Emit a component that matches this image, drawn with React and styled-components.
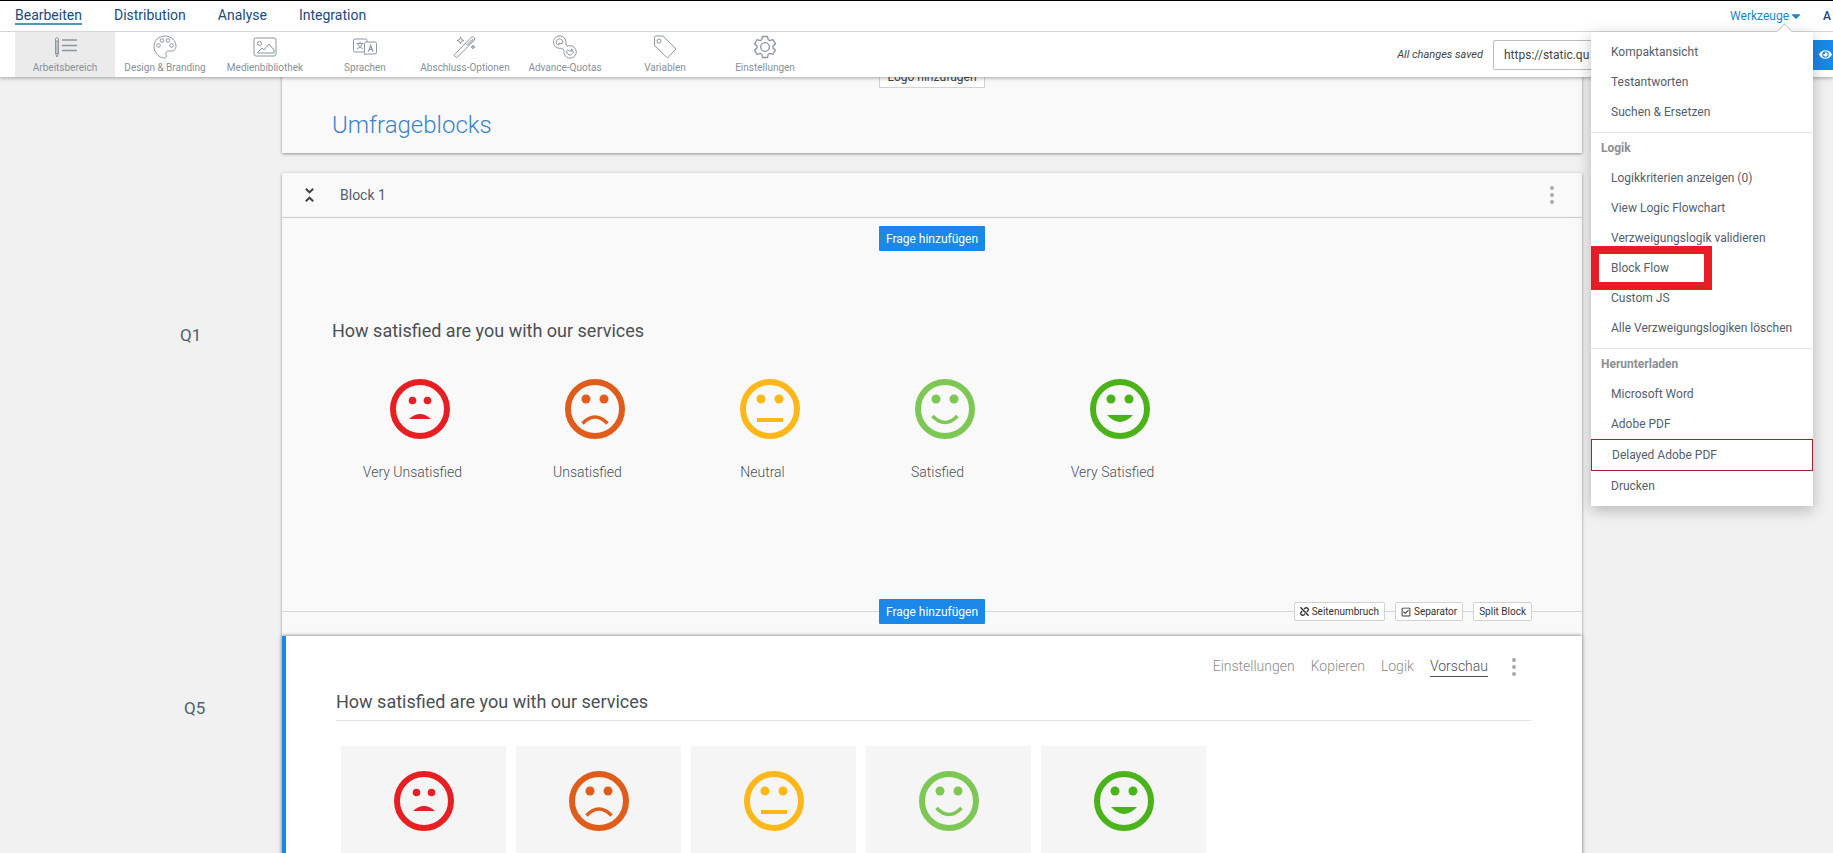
import styled, { createGlobalStyle } from 'styled-components';
import { FaCaretDown, FaEye, FaRegCheckSquare, FaUnlink } from 'react-icons/fa';

const GlobalStyle = createGlobalStyle`
  * {
    box-sizing: border-box;
  }

  body {
    margin: 0;
    background: #f1f1f1;
    color: #545e6b;
    font-family: Roboto, 'Open Sans', sans-serif;
    font-size: 12px;
  }

  button,
  input {
    font-family: inherit;
  }

  a {
    color: inherit;
    text-decoration: none;
  }
`;

const Page = styled.div`
  height: 100vh;
  overflow: hidden;
`;

const Header = styled.header`
  position: relative;
  z-index: 5;
  background: #fff;
  border-top: 1px solid #000;
  box-shadow: 0 1px 4px rgba(0, 0, 0, 0.35);
`;

const TopBar = styled.div`
  display: flex;
  justify-content: space-between;
  height: 31px;
  padding-left: 15px;
  border-bottom: 1px solid #d4d6d8;
`;

const MainNav = styled.nav`
  display: flex;
  align-items: center;
  gap: 32px;
`;

const NavLink = styled.a`
  color: #1b4a7e;
  font-size: 14px;
  line-height: 16px;
  border-bottom: 2px solid ${({ $active }) => ($active ? '#4a9ab5' : 'transparent')};
`;

const SideNav = styled.div`
  display: flex;
  align-items: center;
  gap: 20px;
`;

const ToolsWrapper = styled.div`
  position: relative;
`;

const ToolsButton = styled.button`
  display: flex;
  align-items: center;
  height: 30px;
  padding: 0;
  border: 0;
  background: none;
  color: #1b87c0;
  font-size: 12px;
`;

const AccountLink = styled.a`
  width: 10px;
  color: #1b4a7e;
  font-size: 12px;
  font-weight: 500;
`;

const ToolBar = styled.div`
  display: flex;
  justify-content: space-between;
  height: 45px;
  padding-left: 15px;
`;

const ToolList = styled.div`
  display: flex;
`;

const Tool = styled.button`
  display: flex;
  flex-direction: column;
  align-items: center;
  gap: 3px;
  width: 100px;
  padding: 3px 0 0;
  border: 0;
  background: ${({ $active }) => ($active ? '#ebebeb' : 'none')};
  color: #87919a;
  font-size: 10px;
  line-height: 12px;
  white-space: nowrap;
`;

const ToolIcon = styled.svg`
  width: 24px;
  height: 24px;
  fill: none;
  stroke: #8d969f;
  stroke-width: 1;
`;

const Share = styled.div`
  display: flex;
  align-items: center;
`;

const Saved = styled.span`
  margin-right: 10px;
  color: #444;
  font-size: 11px;
  font-style: italic;
`;

const UrlInput = styled.input`
  width: 320px;
  height: 30px;
  padding: 0 10px;
  border: 1px solid #b9bbbd;
  border-radius: 2px;
  color: #444;
  font-size: 12px;
`;

const PreviewButton = styled.button`
  display: flex;
  align-items: center;
  width: 20px;
  height: 30px;
  padding: 0 0 0 6px;
  border: 0;
  background: #1b87e6;
  color: #fff;
`;

const Menu = styled.div`
  position: absolute;
  top: 31px;
  right: -10px;
  width: 222px;
  background: #fff;
  box-shadow: 0 4px 14px rgba(0, 0, 0, 0.25);

  &::before {
    content: '';
    position: absolute;
    top: -6px;
    right: 22px;
    width: 12px;
    height: 12px;
    background: #fff;
    border: solid #c6cacd;
    border-width: 1px 0 0 1px;
    transform: rotate(45deg);
  }
`;

const MenuGroup = styled.div`
  position: relative;
  padding: 0 0 5px;
  background: #fff;

  & + & {
    border-top: 1px solid #e4e6e8;
  }

  &:first-child {
    padding-top: 5px;
  }
`;

const MenuHeading = styled.h4`
  margin: 0;
  padding-left: 10px;
  color: #8b8f93;
  font-size: 12px;
  font-weight: 700;
  line-height: 30px;
`;

const MenuItem = styled.a`
  position: relative;
  display: block;
  padding-left: 20px;
  border: ${({ $outlined }) => ($outlined ? '1px solid #a8232b' : '0')};
  font-size: 12px;
  line-height: 30px;
  white-space: nowrap;
`;

const Highlight = styled.span`
  position: absolute;
  z-index: 1;
  top: -7px;
  left: 0;
  width: 121px;
  height: 44px;
  border: 8px solid #e81c24;
`;

const Main = styled.main`
  margin-top: -15px;
`;

const Row = styled.div`
  display: grid;
  grid-template-columns: 282px 1fr 251px;
`;

const QuestionNumber = styled.div`
  grid-column: 1;
  padding: ${({ $top }) => $top}px 0 0 ${({ $left }) => $left}px;
  color: #545e6b;
  font-size: 17px;
  line-height: 24px;
`;

const Panel = styled.section`
  grid-column: 2;
  background: #f9f9f9;
  box-shadow: 0 1px 3px rgba(0, 0, 0, 0.4);
`;

const TitlePanel = styled(Panel)`
  display: flex;
  flex-direction: column;
  align-items: center;
  height: 91px;
  margin-bottom: 20px;
`;

const SurveyTitle = styled.h1`
  align-self: flex-start;
  margin: 21px 0 0 50px;
  color: #3b84c4;
  font-size: 24px;
  font-weight: 300;
  line-height: 32px;
`;

const LogoButton = styled.button`
  height: 26px;
  padding: 4px 7px 0;
  border: 1px solid #d0d2d4;
  background: #fff;
  color: #444;
  font-size: 12px;
`;

const BlockHeader = styled(Panel)`
  display: flex;
  align-items: center;
  height: 45px;
  padding: 0 25px 0 23px;
  border-bottom: 1px solid #d9dbdc;
`;

const BlockName = styled.h2`
  flex: 1;
  margin: 0 0 0 26px;
  font-size: 14px;
  font-weight: 400;
`;

const IconButton = styled.button`
  display: flex;
  padding: 0;
  border: 0;
  background: none;
`;

const QuestionPanel = styled(Panel)`
  display: flex;
  flex-direction: column;
  height: 418px;
  padding-top: 8px;
`;

const ActivePanel = styled(Panel)`
  position: relative;
  height: 340px;
  padding: 21px 50px 0;
  border-left: 4px solid #1b87e6;
  background: #fff;
  box-shadow: 0 0 4px rgba(0, 0, 0, 0.55);
`;

const AddButton = styled.button`
  align-self: center;
  height: 25px;
  padding: 0 7px;
  border: 0;
  border-radius: 1px;
  background: #1b87e6;
  color: #fff;
  font-size: 12px;
`;

const QuestionTitle = styled.h3`
  margin: ${({ $underlined }) => ($underlined ? '12px 0 25px' : '67px 50px 35px')};
  padding-bottom: ${({ $underlined }) => ($underlined ? 5 : 0)}px;
  border-bottom: ${({ $underlined }) => ($underlined ? '1px solid #e4e6e8' : '0')};
  color: #4c4f54;
  font-size: 18px;
  font-weight: 400;
  line-height: 26px;
`;

const Faces = styled.div`
  display: flex;
  gap: 10px;
  padding-left: ${({ $indent }) => $indent}px;
`;

const FaceTile = styled.div`
  display: flex;
  flex-direction: column;
  align-items: center;
  gap: 22px;
  width: 165px;
  padding: ${({ $filled }) => ($filled ? '25px 0 70px' : '0')};
  background: ${({ $filled }) => ($filled ? '#f5f5f5' : 'none')};
`;

const FaceLabel = styled.span`
  padding-right: 14px;
  color: #4c5056;
  font-size: 14px;
  font-weight: 300;
  line-height: 22px;
`;

const InsertBar = styled.div`
  display: grid;
  grid-template-columns: 1fr auto 1fr;
  align-items: center;
  margin-top: auto;
  margin-bottom: 12px;
  background: linear-gradient(#d4d6d8, #d4d6d8) center / 100% 1px no-repeat;

  ${AddButton} {
    grid-column: 2;
  }
`;

const InsertActions = styled.div`
  display: flex;
  justify-content: flex-end;
  gap: 10px;
  padding-right: 50px;
`;

const SmallButton = styled.button`
  display: flex;
  align-items: center;
  gap: 3px;
  height: 19px;
  padding: 0 5px;
  border: 1px solid #d0d2d4;
  border-radius: 2px;
  background: #fff;
  color: #333;
  font-size: 10px;
`;

const QuestionActions = styled.div`
  display: flex;
  align-items: center;
  justify-content: flex-end;
  gap: 16px;
  padding-right: 13px;
`;

const QuestionAction = styled.a`
  color: ${({ $active }) => ($active ? '#4c4f54' : '#8c8c8c')};
  border-bottom: 1px solid ${({ $active }) => ($active ? '#4c4f54' : 'transparent')};
  font-size: 14px;
  font-weight: 300;
  line-height: 19px;

  &:last-of-type {
    margin-right: 5px;
  }
`;

const TOOLS = [
  {
    label: 'Arbeitsbereich',
    icon: (
      <>
        <path d="M2.500 3.500q1.500-2 3 0v15L4 22l-1.500-3.500zM2.500 6h3M2.500 18.500h3M4 6v12" />
        <path d="M9 5h15M9 10.500h15M9 15.500h15" strokeWidth="1.500" />
      </>
    ),
  },
  {
    label: 'Design & Branding',
    icon: (
      <>
        <path d="M12 1C5.500 1 1 5.500 1 11.500S6 23 11.500 23c2 0 2.500-1.200 1.800-2.600-.8-1.800-.8-4.400 2.200-4.400h3c2.600 0 4.500-1.600 4.500-4.500C23 5.500 18 1 12 1z" />
        <circle cx="5.500" cy="10.500" r="1.800" />
        <circle cx="9" cy="5.500" r="1.800" />
        <circle cx="15" cy="5.500" r="1.800" />
        <circle cx="18.500" cy="10.500" r="1.800" />
      </>
    ),
  },
  {
    label: 'Medienbibliothek',
    icon: (
      <>
        <rect x="1" y="3" width="22" height="18" rx="2" />
        <circle cx="6.500" cy="8.500" r="2" />
        <path d="M4 18l5-5 2 2 5-6 5 6v3z" />
      </>
    ),
  },
  {
    label: 'Sprachen',
    icon: (
      <>
        <path d="M11 17H2q-1.500 0-1.500-1.500v-10Q.5 4 2 4h10.500Q14 4 14 5.500V7" />
        <path d="M13.500 7H22q1.500 0 1.500 1.500v9Q23.500 19 22 19h-8.500q-1.500 0-1.500 1-.5-1-.5-2.500v-9Q11.500 7 13.500 7z" />
        <path d="M3.500 8.500h7M7 7v1.500M9.500 8.500Q8.500 12 4 14M4.500 8.500Q6 12 10 14" />
        <path d="M15.500 16.500l2.200-6 2.300 6M16.300 14.500h3" strokeWidth="1.200" />
      </>
    ),
  },
  {
    label: 'Abschluss-Optionen',
    icon: (
      <>
        <path d="M1.500 19.500L18 2.500q1.500-1.500 3 0t0 3L4.500 22q-1 1-2 0l-1-1q-.7-.7 0-1.500zM14 9.500l4.500-4.500q1-1 1.500-.5t-.5 1.500L15 10.500z" />
        <path d="M7.500 2l.9 2.600L11 5.500l-2.600.9L7.500 9l-.9-2.600L4 5.500l2.600-.9zM20 10l.5 1.500 1.500.5-1.500.5L20 14l-.5-1.500L18 12l1.500-.5z" />
      </>
    ),
  },
  {
    label: 'Advance-Quotas',
    icon: (
      <>
        <path d="M9.500 13.500L7.300 13.300A6.200 6.200 0 1 1 12.800 6q.4 1.500-.1 3l1.300 2 3.200-.3A6.200 6.200 0 1 1 11 18q-.3-1.300 0-2.500z" />
        <path d="M9.500 8.500A3.200 3.200 0 1 0 6 10.300l-.3-2 2 .2zM14.800 14.500A3.200 3.200 0 1 0 18.500 14l.2 2.200-2.500-.2z" />
      </>
    ),
  },
  {
    label: 'Variablen',
    icon: (
      <>
        <path d="M1.500 2.500q0-1.500 1.500-1.500h7L23 13.800 14.500 23 1.500 10.500z" />
        <circle cx="6" cy="6" r="2" />
      </>
    ),
  },
  {
    label: 'Einstellungen',
    icon: (
      <>
        <path
          d="M9.500 1.500h5l.7 3.200 1.600.9 3.100-1 2.500 4.300-2.400 2.200v1.800l2.400 2.200-2.500 4.300-3.100-1-1.600.9-.7 3.200h-5l-.7-3.200-1.600-.9-3.100 1-2.500-4.300L4 12.900v-1.800L1.600 8.900l2.500-4.300 3.100 1 1.600-.9z"
          strokeLinejoin="round"
          strokeWidth="1.300"
        />
        <circle cx="12" cy="12" r="4.300" strokeWidth="1.300" />
      </>
    ),
  },
];

const MENU = [
  { items: ['Kompaktansicht', 'Testantworten', 'Suchen & Ersetzen'] },
  {
    heading: 'Logik',
    items: [
      'Logikkriterien anzeigen (0)',
      'View Logic Flowchart',
      'Verzweigungslogik validieren',
      'Block Flow',
      'Custom JS',
      'Alle Verzweigungslogiken löschen',
    ],
  },
  {
    heading: 'Herunterladen',
    items: ['Microsoft Word', 'Adobe PDF', 'Delayed Adobe PDF', 'Drucken'],
  },
];

const FACES = [
  {
    label: 'Very Unsatisfied',
    color: '#e62022',
    eyes: { x: 7.5, y: 21.5, r: 3.8 },
    mouth: <path d="M19 40q11-10 22 0z" fill="#e62022" />,
  },
  {
    label: 'Unsatisfied',
    color: '#e05c1a',
    eyes: { x: 9, y: 20, r: 4.5 },
    mouth: (
      <path d="M17.500 44.500q12.500-13 25 0" fill="none" stroke="#e05c1a" strokeWidth="3.500" />
    ),
  },
  {
    label: 'Neutral',
    color: '#fcb81a',
    eyes: { x: 9, y: 20, r: 4.5 },
    mouth: <path d="M17 39h26v4H17z" fill="#fcb81a" />,
  },
  {
    label: 'Satisfied',
    color: '#7dc855',
    eyes: { x: 9, y: 20, r: 4.5 },
    mouth: (
      <path d="M17.500 37q12.500 13 25 0" fill="none" stroke="#7dc855" strokeWidth="3.500" />
    ),
  },
  {
    label: 'Very Satisfied',
    color: '#4bb31a',
    eyes: { x: 9, y: 20, r: 4.5 },
    mouth: <path d="M17 36h26q-13 14-26 0z" fill="#4bb31a" />,
  },
];

const Face = ({ color, eyes, mouth }) => (
  <svg width="60" height="60" viewBox="0 0 60 60">
    <circle cx="30" cy="30" r="27" fill="none" stroke={color} strokeWidth="6" />
    <circle cx={30 - eyes.x} cy={eyes.y} r={eyes.r} fill={color} />
    <circle cx={30 + eyes.x} cy={eyes.y} r={eyes.r} fill={color} />
    {mouth}
  </svg>
);

const Dots = () => (
  <IconButton aria-label="Mehr">
    <svg width="10" height="20" viewBox="0 0 10 20" fill="#aaa">
      <circle cx="5" cy="3" r="2" />
      <circle cx="5" cy="10" r="2" />
      <circle cx="5" cy="17" r="2" />
    </svg>
  </IconButton>
);

const FaceRow = ({ filled }) => (
  <Faces $indent={filled ? 5 : 55}>
    {FACES.map(face => (
      <FaceTile key={face.label} $filled={filled}>
        <Face {...face} />
        {!filled && <FaceLabel>{face.label}</FaceLabel>}
      </FaceTile>
    ))}
  </Faces>
);

const ToolsMenu = () => (
  <Menu>
    {MENU.map(({ heading, items }, id) => (
      <MenuGroup key={id}>
        {heading && <MenuHeading>{heading}</MenuHeading>}
        {items.map(item => (
          <MenuItem key={item} href="#" $outlined={item === 'Delayed Adobe PDF'}>
            {item}
            {item === 'Block Flow' && <Highlight />}
          </MenuItem>
        ))}
      </MenuGroup>
    ))}
  </Menu>
);

const App = () => {
  return (
    <Page>
      <GlobalStyle />
      <Header>
        <TopBar>
          <MainNav>
            <NavLink href="#" $active>
              Bearbeiten
            </NavLink>
            <NavLink href="#">Distribution</NavLink>
            <NavLink href="#">Analyse</NavLink>
            <NavLink href="#">Integration</NavLink>
          </MainNav>
          <SideNav>
            <ToolsWrapper>
              <ToolsButton>
                Werkzeuge <FaCaretDown size={14} />
              </ToolsButton>
              <ToolsMenu />
            </ToolsWrapper>
            <AccountLink href="#">A</AccountLink>
          </SideNav>
        </TopBar>
        <ToolBar>
          <ToolList>
            {TOOLS.map(({ label, icon }, id) => (
              <Tool key={label} $active={id === 0}>
                <ToolIcon viewBox="0 0 24 24">{icon}</ToolIcon>
                {label}
              </Tool>
            ))}
          </ToolList>
          <Share>
            <Saved>All changes saved</Saved>
            <UrlInput aria-label="URL" defaultValue="https://static.qu" />
            <PreviewButton aria-label="Vorschau">
              <FaEye size={13} />
            </PreviewButton>
          </Share>
        </ToolBar>
      </Header>
      <Main>
        <Row>
          <TitlePanel>
            <LogoButton>Logo hinzufügen</LogoButton>
            <SurveyTitle>Umfrageblocks</SurveyTitle>
          </TitlePanel>
        </Row>
        <Row>
          <BlockHeader>
            <IconButton aria-label="Block einklappen">
              <svg width="9" height="14" viewBox="0 0 9 14" fill="none" stroke="#444" strokeWidth="2">
                <path d="M.8.8l3.700 3.500L8.200.8M.8 13.200l3.700-3.500 3.700 3.500" />
              </svg>
            </IconButton>
            <BlockName>Block 1</BlockName>
            <Dots />
          </BlockHeader>
        </Row>
        <Row>
          <QuestionNumber $top={105} $left={180}>
            Q1
          </QuestionNumber>
          <QuestionPanel>
            <AddButton>Frage hinzufügen</AddButton>
            <QuestionTitle>How satisfied are you with our services</QuestionTitle>
            <FaceRow />
            <InsertBar>
              <AddButton>Frage hinzufügen</AddButton>
              <InsertActions>
                <SmallButton>
                  <FaUnlink size={9} /> Seitenumbruch
                </SmallButton>
                <SmallButton>
                  <FaRegCheckSquare size={10} /> Separator
                </SmallButton>
                <SmallButton>Split Block</SmallButton>
              </InsertActions>
            </InsertBar>
          </QuestionPanel>
        </Row>
        <Row>
          <QuestionNumber $top={60} $left={184}>
            Q5
          </QuestionNumber>
          <ActivePanel>
            <QuestionActions>
              <QuestionAction href="#">Einstellungen</QuestionAction>
              <QuestionAction href="#">Kopieren</QuestionAction>
              <QuestionAction href="#">Logik</QuestionAction>
              <QuestionAction href="#" $active>
                Vorschau
              </QuestionAction>
              <Dots />
            </QuestionActions>
            <QuestionTitle $underlined>How satisfied are you with our services</QuestionTitle>
            <FaceRow filled />
          </ActivePanel>
        </Row>
      </Main>
    </Page>
  );
};

export default App;
